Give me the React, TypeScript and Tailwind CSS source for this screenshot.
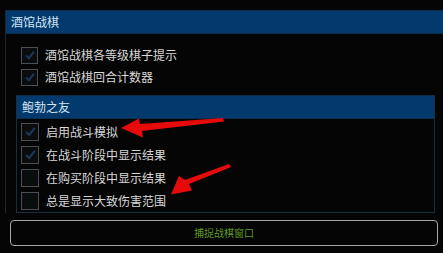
import React from 'react';

const FONT = '"Noto Sans CJK SC", "Noto Sans", sans-serif';

type Item = { label: string; checked: boolean };

const tavernItems: Item[] = [
  { label: '酒馆战棋各等级棋子提示', checked: true },
  { label: '酒馆战棋回合计数器', checked: true },
];

const bobItems: Item[] = [
  { label: '启用战斗模拟', checked: true },
  { label: '在战斗阶段中显示结果', checked: true },
  { label: '在购买阶段中显示结果', checked: false },
  { label: '总是显示大致伤害范围', checked: false },
];

const Check: React.FC<{ checked: boolean; size: number }> = ({ checked, size }) => (
  <div
    className="shrink-0 border border-[#4a4f55] bg-[#0b0c0e] flex items-center justify-center"
    style={{ width: size, height: size }}
  >
    {checked && (
      <svg width={size - 5} height={size - 5} viewBox="0 0 12 12">
        <path d="M2 6.4 L4.8 9.2 L10 2.6" fill="none" stroke="#1b3856" strokeWidth="2" />
      </svg>
    )}
  </div>
);

const Row: React.FC<{ item: Item; size: number; h: string }> = ({ item, size, h }) => (
  <div className={`flex items-center gap-[7px] ${h}`}>
    <Check checked={item.checked} size={size} />
    <span className="text-[12px] leading-none text-[#d8d8d8]">{item.label}</span>
  </div>
);

const Header: React.FC<{ title: string }> = ({ title }) => (
  <div className="h-[24px] bg-[#023a6e] border-y border-[#0d2c4a] flex items-center pl-[5px]">
    <span className="text-[12px] leading-none text-[#d4e4f2]">{title}</span>
  </div>
);

export default function App() {
  return (
    <div
      className="relative w-[443px] h-[253px] overflow-hidden bg-[#050505] pt-[10px]"
      style={{ fontFamily: FONT }}
    >
      <div className="ml-[5px] border-l border-[#1a2733]">
        <Header title="酒馆战棋" />
        <div className="pl-[15px] mt-[10px]">
          {tavernItems.map((it) => (
            <Row key={it.label} item={it} size={17} h="h-[22px]" />
          ))}
        </div>
        <div className="ml-[10px] w-[419px] mt-[7px] border-x border-b border-[#16303f]">
          <Header title="鲍勃之友" />
          <div className="pl-[4px] pt-[1px]">
            {bobItems.map((it) => (
              <Row key={it.label} item={it} size={18} h="h-[23px]" />
            ))}
          </div>
        </div>
      </div>

      <div className="mx-[10px] mt-[7px] w-[428px] h-[26px] rounded-[4px] border border-[#a8a8a8] flex items-center justify-center">
        <span className="text-[10px] leading-none text-[#5f9a22]">捕捉战棋窗口</span>
      </div>

      {/* red annotation arrows */}
      <svg className="absolute left-0 top-0 pointer-events-none" width="443" height="253">
        <polygon
          points="223,118 224,121.5 142,131 143,137.5 121,128 139,118.5 140,124"
          fill="#e60a0a"
        />
        <polygon
          points="229,164 231,167 189,184 192,190.5 171,194.5 179,176 185,180"
          fill="#e60a0a"
        />
      </svg>
    </div>
  );
}
